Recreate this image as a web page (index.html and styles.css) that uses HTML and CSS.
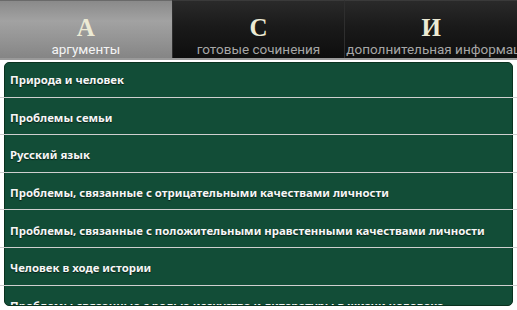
FILE: index.html
```html
<!DOCTYPE html>
<html lang="ru">
<head>
    <meta charset="UTF-8">
    <meta name="viewport" content="width=device-width, initial-scale=1.0">
    <title>Аргументы</title>
    <link rel="stylesheet" href="styles.css">
</head>
<body>
    <div class="tabs">
        <div class="tab active">
            <span class="tab-letter">А</span>
            <span class="tab-label">аргументы</span>
        </div>
        <div class="tab">
            <span class="tab-letter">С</span>
            <span class="tab-label">готовые сочинения</span>
        </div>
        <div class="tab">
            <span class="tab-letter">И</span>
            <span class="tab-label long">дополнительная информация</span>
        </div>
    </div>

    <div class="topics">
        <ul class="topic-list">
            <li>Природа и человек</li>
            <li>Проблемы семьи</li>
            <li>Русский язык</li>
            <li>Проблемы, связанные с отрицательными качествами личности</li>
            <li>Проблемы, связанные с положительными нравстенными качествами личности</li>
            <li>Человек в ходе истории</li>
            <li>Проблемы,связанные с ролью исскуства и литературы в жизни человека</li>
        </ul>
    </div>
</body>
</html>
```

FILE: styles.css
```css
body {
    margin: 0;
    width: 517px;
    height: 310px;
    overflow: hidden;
    background-color: #fff;
    font-family: 'Noto Sans', 'Open Sans', sans-serif;
}

/* Tab bar */
.tabs {
    display: flex;
    height: 58px;
    border-bottom: 2px solid #9a9a9a;
    margin-bottom: 2px;
    background-color: #161616;
}
.tab {
    flex: 1;
    min-width: 0;
    display: flex;
    flex-direction: column;
    align-items: center;
    background: linear-gradient(#2a2a2a, #1a1a1a 45%, #0e0e0e);
    border-left: 1px solid #2e2e2e;
    border-top: 1px solid #3a3a3a;
}
.tab.active {
    background: linear-gradient(#8a8a8a, #a2a2a2 35%, #939393 70%, #858585);
    border-left: none;
    border-top: 1px solid #6a6a6a;
}
.tab-letter {
    font-family: 'Liberation Serif', 'DejaVu Serif', serif;
    font-weight: bold;
    font-size: 25px;
    line-height: 28px;
    margin-top: 13px;
    color: #ecead4;
}
.tab-label {
    font-family: Roboto, 'Noto Sans', sans-serif;
    font-size: 13.5px;
    line-height: 15px;
    color: #a6a6a6;
    white-space: nowrap;
}
.tab.active .tab-label {
    color: #f4f4f4;
}
.tab-label.long {
    align-self: stretch;
    overflow: hidden;
    padding-left: 1px;
}

/* Topic list */
.topics {
    margin: 0 4px;
    height: 242px;
    border: 1px solid #0a321f;
    border-radius: 5px;
    background-color: #124d37;
    overflow-x: visible;
    overflow-y: clip;
}
.topic-list {
    list-style: none;
    margin: -3px -5px 0;
    padding: 0;
}
.topic-list li {
    display: flex;
    align-items: center;
    padding: 3px 10px 0;
    box-sizing: border-box;
    height: 37.6px;
    border-bottom: 1px solid #cfcfcf;
    font-size: 11.4px;
    font-weight: bold;
    color: #f6f6f6;
    text-shadow: 0 1px 1px rgba(0,0,0,0.6);
    white-space: nowrap;
}
```
